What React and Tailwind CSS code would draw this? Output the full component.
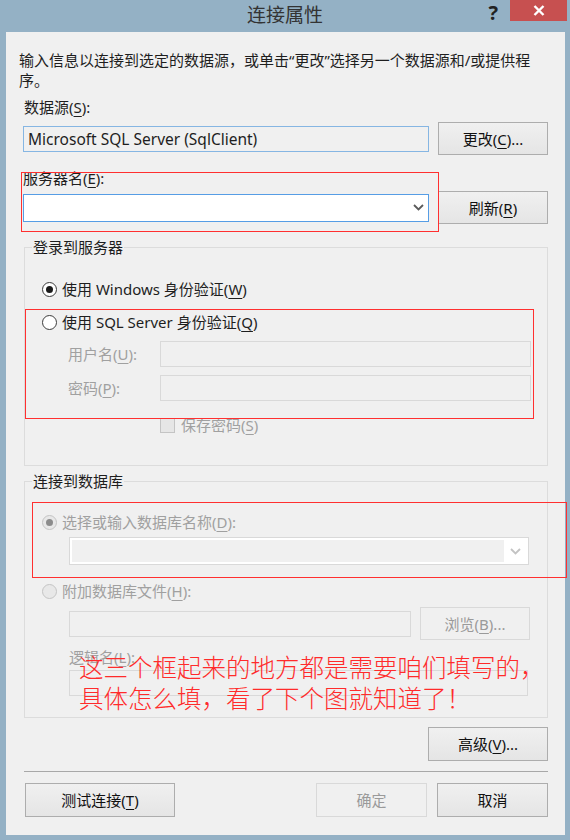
import React from "react";

const U = ({ children }) => (
  <span className="underline underline-offset-[3px] decoration-1">{children}</span>
);

const Btn = ({ className = "", disabled = false, children }) => (
  <div
    className={
      "flex items-center justify-center border " +
      (disabled
        ? "border-[#d9d9d9] bg-[#f0f0f0] text-[#9a9a9a] "
        : "border-[#adadad] bg-linear-to-b from-[#f0f0f0] to-[#e5e5e5] text-[#111] ") +
      className
    }
  >
    {children}
  </div>
);

const Radio = ({ checked = false, disabled = false }) => (
  <span
    className={
      "w-[15px] h-[15px] rounded-full border flex items-center justify-center shrink-0 " +
      (disabled ? "border-[#c4c4c4] bg-[#e8e8e8]" : "border-[#3c3c3c] bg-white")
    }
  >
    {checked && (
      <span
        className={
          "w-[7px] h-[7px] rounded-full " +
          (disabled ? "bg-[#8c8c8c]" : "bg-[#1a1a1a]")
        }
      />
    )}
  </span>
);

const Chevron = ({ color }) => (
  <svg width="11" height="7" viewBox="0 0 11 7">
    <path d="M1 1 L5.5 5.5 L10 1" fill="none" stroke={color} strokeWidth="1.8" />
  </svg>
);

const Field = ({ className = "" }) => (
  <div className={"h-[26px] border border-[#d9d9d9] bg-[#f0f0f0] " + className} />
);

export default function App() {
  return (
    <div className="w-[570px] h-[840px] bg-[#94b1c5] relative flex flex-col overflow-hidden font-[family-name:'Noto_Sans','Noto_Sans_CJK_SC',sans-serif]">
      {/* title bar */}
      <div className="h-[32px] grid grid-cols-[1fr_auto_1fr]">
        <div />
        <div className="text-[19px] leading-[30px] text-[#333]">连接属性</div>
        <div className="flex justify-end items-start">
          <span className="mt-[1px] text-[20px] font-bold leading-[24px] text-[#222] mr-[12px]">?</span>
          <div className="w-[57px] h-[21px] mr-[3px] bg-[#c75050] flex items-center justify-center">
            <svg width="12" height="11" viewBox="0 0 12 11">
              <path d="M1.5 1 L10.5 10 M10.5 1 L1.5 10" stroke="#fff" strokeWidth="2.4" />
            </svg>
          </div>
        </div>
      </div>

      {/* client area */}
      <div className="ml-[6px] mr-[5px] h-[803px] bg-[#f0f0f0] px-[17px] pt-[18px] flex flex-col text-[15px] leading-[20px] text-[#1e1e1e]">
        <p className="-mx-[4px]">
          输入信息以连接到选定的数据源，或单击“更改”选择另一个数据源和/或提供程
          <br />
          序。
        </p>

        <div className="mt-[7px] ml-[1px]">
          数据源(<U>S</U>):
        </div>
        <div className="mt-[5px] h-[33px] flex items-center">
          <div className="w-[406px] h-[26px] border border-[#86b6e3] bg-[#f0f0f0] pl-[4px] flex items-center text-[15.5px]">
            Microsoft SQL Server (SqlClient)
          </div>
          <Btn className="ml-auto w-[110px] h-[33px]">
            更改(<U>C</U>)...
          </Btn>
        </div>

        <div className="mt-[13px]">
          服务器名(<U>E</U>):
        </div>
        <div className="mt-[3px] h-[33px] flex items-center">
          <div className="w-[406px] h-[28px] border border-[#569de5] bg-white flex items-center justify-end pr-[4px]">
            <Chevron color="#5a5a5a" />
          </div>
          <Btn className="ml-auto w-[110px] h-[33px]">
            刷新(<U>R</U>)
          </Btn>
        </div>

        {/* login group */}
        <fieldset className="mt-[13px] ml-[1px] border border-[#dcdcdc] pb-[30px]">
          <legend className="ml-[7px] px-[1px] leading-[20px]">登录到服务器</legend>
          <div className="mt-[22px] ml-[17px] h-[20px] flex items-center gap-[5px]">
            <Radio checked />
            <span>
              使用 Windows 身份验证(<U>W</U>)
            </span>
          </div>
          <div className="mt-[13px] ml-[17px] h-[20px] flex items-center gap-[5px]">
            <Radio />
            <span>
              使用 SQL Server 身份验证(<U>Q</U>)
            </span>
          </div>
          <div className="mt-[9px] ml-[43px] mr-[16px] flex items-center text-[#a0a0a0]">
            <span className="w-[92px]">
              用户名(<U>U</U>):
            </span>
            <Field className="flex-1" />
          </div>
          <div className="mt-[8px] ml-[43px] mr-[16px] flex items-center text-[#a0a0a0]">
            <span className="w-[92px]">
              密码(<U>P</U>):
            </span>
            <Field className="flex-1" />
          </div>
          <div className="mt-[14px] ml-[135px] h-[20px] flex items-center gap-[6px] text-[#a0a0a0]">
            <span className="w-[15px] h-[15px] border border-[#c4c4c4] bg-[#e6e6e6]" />
            <span>
              保存密码(<U>S</U>)
            </span>
          </div>
        </fieldset>

        {/* database group */}
        <fieldset className="mt-[5px] ml-[1px] border border-[#dcdcdc] pb-[21px]">
          <legend className="ml-[7px] px-[1px] leading-[20px]">连接到数据库</legend>
          <div className="mt-[21px] ml-[17px] h-[20px] flex items-center gap-[5px] text-[#a0a0a0]">
            <Radio checked disabled />
            <span>
              选择或输入数据库名称(<U>D</U>):
            </span>
          </div>
          <div className="mt-[5px] ml-[44px] mr-[18px] h-[28px] border border-[#d9d9d9] bg-white p-[2px] flex">
            <div className="flex-1 bg-[#f0f0f0]" />
            <div className="w-[22px] flex items-center justify-center">
              <Chevron color="#c3c3c3" />
            </div>
          </div>
          <div className="mt-[16px] ml-[17px] h-[20px] flex items-center gap-[5px] text-[#a0a0a0]">
            <Radio disabled />
            <span>
              附加数据库文件(<U>H</U>):
            </span>
          </div>
          <div className="mt-[6px] ml-[44px] mr-[17px] h-[33px] flex items-center gap-[9px]">
            <Field className="flex-1" />
            <Btn disabled className="w-[110px] h-[33px]">
              浏览(<U>B</U>)...
            </Btn>
          </div>
          <div className="mt-[7px] ml-[44px] text-[#a0a0a0]">
            逻辑名(<U>L</U>):
          </div>
          <Field className="mt-[3px] ml-[44px] mr-[19px]" />
        </fieldset>

        <Btn className="mt-[9px] self-end w-[120px] h-[34px]">
          高级(<U>V</U>)...
        </Btn>

        <div className="mt-[10px] ml-[1px] h-px bg-[#a8a8a8]" />

        <div className="mt-[11px] flex gap-[10px]">
          <Btn className="ml-[2px] w-[150px] h-[34px]">
            测试连接(<U>T</U>)
          </Btn>
          <Btn disabled className="ml-auto w-[111px] h-[34px]">
            确定
          </Btn>
          <Btn className="w-[111px] h-[34px]">取消</Btn>
        </div>
      </div>

      {/* annotation overlays */}
      <div className="absolute left-[21px] top-[172px] w-[418px] h-[60px] border border-[#ff3030]" />
      <div className="absolute left-[25px] top-[309px] w-[509px] h-[110px] border border-[#ff3030]" />
      <div className="absolute left-[32px] top-[502px] w-[535px] h-[76px] border border-[#ff3030]" />
      <div className="absolute left-[79px] top-[651px] text-[24.5px] leading-[31px] font-light text-[#ff2b2b] font-[family-name:'Noto_Sans_CJK_SC',sans-serif]">
        这三个框起来的地方都是需要咱们填写的，
        <br />
        具体怎么填，看了下个图就知道了！
      </div>
    </div>
  );
}
